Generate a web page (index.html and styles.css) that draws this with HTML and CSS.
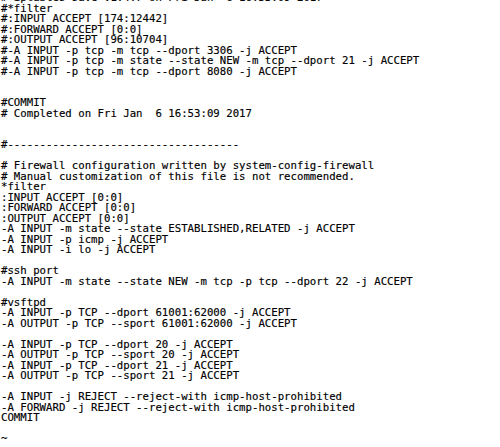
FILE: index.html
```html
<!DOCTYPE html>
<html>
<head>
<meta charset="utf-8">
<link rel="stylesheet" href="styles.css">
</head>
<body>
<pre class="term"># iptables-save v1.4.7 on Fri Jan  6 16:53:09 2017
#*filter
#:INPUT ACCEPT [174:12442]
#:FORWARD ACCEPT [0:0]
#:OUTPUT ACCEPT [96:10704]
#-A INPUT -p tcp -m tcp --dport 3306 -j ACCEPT
#-A INPUT -p tcp -m state --state NEW -m tcp --dport 21 -j ACCEPT
#-A INPUT -p tcp -m tcp --dport 8080 -j ACCEPT


#COMMIT
# Completed on Fri Jan  6 16:53:09 2017


#------------------------------------

# Firewall configuration written by system-config-firewall
# Manual customization of this file is not recommended.
*filter
:INPUT ACCEPT [0:0]
:FORWARD ACCEPT [0:0]
:OUTPUT ACCEPT [0:0]
-A INPUT -m state --state ESTABLISHED,RELATED -j ACCEPT
-A INPUT -p icmp -j ACCEPT
-A INPUT -i lo -j ACCEPT

#ssh port
-A INPUT -m state --state NEW -m tcp -p tcp --dport 22 -j ACCEPT

#vsftpd
-A INPUT -p TCP --dport 61001:62000 -j ACCEPT
-A OUTPUT -p TCP --sport 61001:62000 -j ACCEPT

-A INPUT -p TCP --dport 20 -j ACCEPT
-A OUTPUT -p TCP --sport 20 -j ACCEPT
-A INPUT -p TCP --dport 21 -j ACCEPT
-A OUTPUT -p TCP --sport 21 -j ACCEPT

-A INPUT -j REJECT --reject-with icmp-host-prohibited
-A FORWARD -j REJECT --reject-with icmp-host-prohibited
COMMIT

~</pre>
</body>
</html>
```
FILE: styles.css
```css
html, body {
  margin: 0;
  padding: 0;
  background: #ffffff;
  overflow: hidden;
}
.term {
  margin: -7px 0 0 0;
  padding: 0 0 0 1px;
  font-family: "DejaVu Sans Mono", "Liberation Mono", monospace;
  font-size: 10.7px;
  line-height: 10.5px;
  color: #000000;
  -webkit-text-stroke: 0.15px #000000;
  white-space: pre;
}
```
